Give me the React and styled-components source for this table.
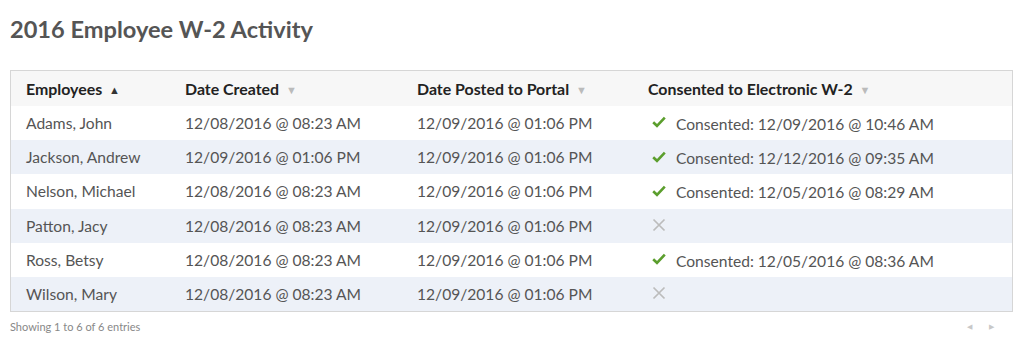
import React from "react";
import styled, { createGlobalStyle } from "styled-components";

const rows = [
  { name: "Adams, John", created: "12/08/2016 @ 08:23 AM", posted: "12/09/2016 @ 01:06 PM", consent: "12/09/2016 @ 10:46 AM" },
  { name: "Jackson, Andrew", created: "12/09/2016 @ 01:06 PM", posted: "12/09/2016 @ 01:06 PM", consent: "12/12/2016 @ 09:35 AM" },
  { name: "Nelson, Michael", created: "12/08/2016 @ 08:23 AM", posted: "12/09/2016 @ 01:06 PM", consent: "12/05/2016 @ 08:29 AM" },
  { name: "Patton, Jacy", created: "12/08/2016 @ 08:23 AM", posted: "12/09/2016 @ 01:06 PM", consent: null },
  { name: "Ross, Betsy", created: "12/08/2016 @ 08:23 AM", posted: "12/09/2016 @ 01:06 PM", consent: "12/05/2016 @ 08:36 AM" },
  { name: "Wilson, Mary", created: "12/08/2016 @ 08:23 AM", posted: "12/09/2016 @ 01:06 PM", consent: null },
];

function App() {
  return (
    <Page>
      <GlobalStyle />
      <Title>2016 Employee W-2 Activity</Title>
      <TableBox>
        <Table>
          <colgroup>
            <col style={{ width: 159 }} />
            <col style={{ width: 232 }} />
            <col style={{ width: 231 }} />
            <col />
          </colgroup>
          <thead>
            <tr>
              <Th>
                Employees <SortArrow active>▲</SortArrow>
              </Th>
              <Th>
                Date Created <SortArrow>▼</SortArrow>
              </Th>
              <Th>
                Date Posted to Portal <SortArrow>▼</SortArrow>
              </Th>
              <Th>
                Consented to Electronic W-2 <SortArrow>▼</SortArrow>
              </Th>
            </tr>
          </thead>
          <tbody>
            {rows.map((r, i) => (
              <Row key={r.name} striped={i % 2 === 1}>
                <Td>{r.name}</Td>
                <Td>{r.created}</Td>
                <Td>{r.posted}</Td>
                <Td>
                  {r.consent ? (
                    <Consent>
                      <CheckIcon />
                      Consented: {r.consent}
                    </Consent>
                  ) : (
                    <Consent>
                      <CrossIcon />
                    </Consent>
                  )}
                </Td>
              </Row>
            ))}
          </tbody>
        </Table>
      </TableBox>
      <Footer>
        <Info>Showing 1 to 6 of 6 entries</Info>
        <Pager>
          <PageArrow>◀</PageArrow>
          <PageArrow>▶</PageArrow>
        </Pager>
      </Footer>
    </Page>
  );
}

function CheckIcon() {
  return (
    <Icon width="14" height="12" viewBox="0 0 14 12">
      <path d="M1.2 6.2 L5 9.8 L12.8 1.6" fill="none" stroke="#5b9e2d" strokeWidth="2.6" />
    </Icon>
  );
}

function CrossIcon() {
  return (
    <Icon width="14" height="14" viewBox="0 0 14 14">
      <path d="M1.5 1.5 L12.5 12.5 M12.5 1.5 L1.5 12.5" fill="none" stroke="#bcbcbc" strokeWidth="1.7" />
    </Icon>
  );
}

const GlobalStyle = createGlobalStyle`
  body {
    margin: 0;
    background: #fff;
    font-family: Lato, "Open Sans", sans-serif;
  }
`;

const Page = styled.div`
  padding: 14px 11px 0 10px;
`;

const Title = styled.h1`
  margin: 0 0 26px;
  font-size: 23.6px;
  line-height: 30px;
  font-weight: 700;
  color: #555;
`;

const TableBox = styled.div`
  border: 1px solid #d6d6d6;
`;

const Table = styled.table`
  width: 100%;
  border-collapse: collapse;
  table-layout: fixed;
`;

const Th = styled.th`
  text-align: left;
  padding: 0 15px;
  height: 35px;
  background: #f7f7f7;
  font-size: 15.9px;
  font-weight: 700;
  color: #222;
  white-space: nowrap;
`;

const SortArrow = styled.span`
  display: inline-block;
  margin-left: 3px;
  font-size: 11px;
  vertical-align: 1px;
  color: ${(p) => (p.active ? "#333" : "#bbb")};
`;

const Row = styled.tr`
  background: ${(p) => (p.striped ? "#edf1f8" : "#fff")};
`;

const Td = styled.td`
  padding: 0 15px;
  height: 34.2px;
  font-size: 15.6px;
  color: #555;
  white-space: nowrap;
`;

const Consent = styled.span`
  display: inline-flex;
  align-items: center;
  gap: 10px;
  padding-left: 4px;
`;

const Icon = styled.svg`
  display: block;
  margin-top: -3px;
`;

const Footer = styled.div`
  display: flex;
  justify-content: space-between;
  align-items: center;
  padding-top: 8px;
`;

const Info = styled.div`
  font-size: 11px;
  color: #888;
`;

const Pager = styled.div`
  display: flex;
  gap: 17px;
  padding-right: 19px;
`;

const PageArrow = styled.span`
  font-size: 7px;
  color: #c8c8c8;
`;

export default App;
